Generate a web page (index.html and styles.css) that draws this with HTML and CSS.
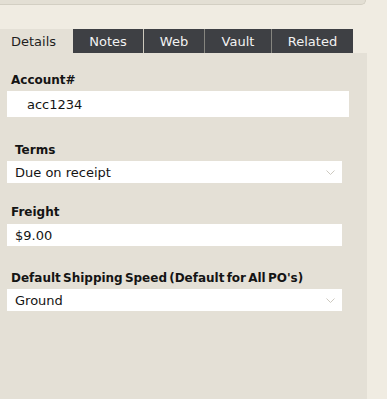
FILE: index.html
```html
<!DOCTYPE html>
<html>
<head>
<meta charset="utf-8">
<link rel="stylesheet" href="styles.css">
</head>
<body>
<div class="top-panel"></div>
<div class="tabs">
  <div class="tab active">Details</div>
  <div class="tab dark t-notes">Notes</div>
  <div class="tab dark t-web sep-light">Web</div>
  <div class="tab dark t-vault sep">Vault</div>
  <div class="tab dark t-related sep">Related</div>
</div>
<div class="panel">
  <div class="field">
    <div class="label">Account#</div>
    <div class="input tall wide"><span class="val indent">acc1234</span></div>
  </div>
  <div class="field f-terms">
    <div class="label indent-label">Terms</div>
    <div class="input select"><span class="val">Due on receipt</span>
      <svg class="chev" width="9" height="6" viewBox="0 0 9 6"><polyline points="0.5,0.5 4.5,4.5 8.5,0.5" fill="none" stroke="#cdc9c0" stroke-width="1"/></svg>
    </div>
  </div>
  <div class="field f-freight">
    <div class="label">Freight</div>
    <div class="input"><span class="val">$9.00</span></div>
  </div>
  <div class="field f-ship">
    <div class="label long">Default Shipping Speed (Default for All PO's)</div>
    <div class="input select"><span class="val">Ground</span>
      <svg class="chev" width="9" height="6" viewBox="0 0 9 6"><polyline points="0.5,0.5 4.5,4.5 8.5,0.5" fill="none" stroke="#cdc9c0" stroke-width="1"/></svg>
    </div>
  </div>
</div>
</body>
</html>
```
FILE: styles.css
```css
html, body {
  margin: 0;
  padding: 0;
}
body {
  background: #f0ece2;
  font-family: "DejaVu Sans", Verdana, sans-serif;
  width: 387px;
  height: 399px;
  overflow: hidden;
}
.top-panel {
  width: 365px;
  height: 4px;
  background: #e3dfd4;
  border-bottom: 1px solid #d3cfc3;
  border-right: 1px solid #d3cfc3;
  border-bottom-right-radius: 6px;
}
.tabs {
  display: flex;
  margin-top: 24px;
  height: 24px;
}
.tab {
  height: 24px;
  line-height: 25px;
  font-size: 13px;
  text-align: center;
}
.tab.active {
  width: 73px;
  background: #e4e0d6;
  color: #1e1e1e;
  text-align: left;
  box-sizing: border-box;
  padding-left: 11px;
}
.tab.dark {
  background: #3e4044;
  color: #f2f2f2;
  box-sizing: border-box;
}
.t-notes { width: 70px; }
.t-web { width: 61px; }
.t-vault { width: 67px; }
.t-related { width: 82px; }
.sep-light { border-left: 1px solid #cdc9bd; }
.sep { border-left: 1px solid #85857f; }
.panel {
  width: 367px;
  height: 346px;
  background: #e4e0d6;
  box-sizing: border-box;
  padding-top: 19px;
  padding-left: 7px;
}
.label {
  font-size: 12px;
  font-weight: bold;
  line-height: 15px;
  padding-top: 1px;
  color: #141414;
  padding-left: 4px;
}
.label.long { word-spacing: -2px; }
.indent-label { padding-left: 8px; }
.input {
  margin-top: 3px;
  width: 335px;
  height: 22px;
  background: #ffffff;
  display: flex;
  align-items: center;
  box-sizing: border-box;
  padding-left: 8px;
  padding-top: 1px;
  position: relative;
}
.input.tall { height: 26px; }
.input.wide { width: 342px; }
.val {
  font-size: 13px;
  color: #141414;
  line-height: 16px;
}
.val.indent { padding-left: 12px; }
.f-terms { margin-top: 25px; }
.f-freight { margin-top: 21px; }
.f-freight .input { margin-top: 4px; }
.f-ship { margin-top: 24px; }
.chev {
  position: absolute;
  right: 7px;
  top: 9px;
}
```
